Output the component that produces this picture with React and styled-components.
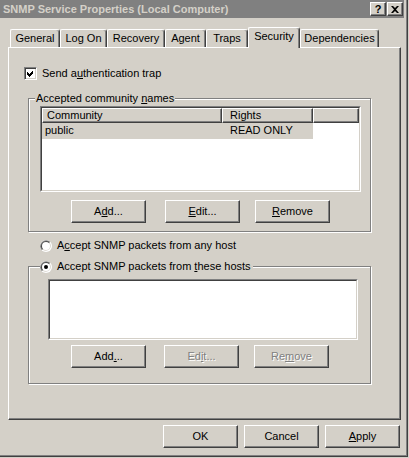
import React from "react";
import styled, { createGlobalStyle } from "styled-components";

const GlobalStyle = createGlobalStyle`
  html, body {
    margin: 0;
    padding: 0;
    background: #d4d0c8;
  }
  body {
    font-family: "Liberation Sans", Arial, sans-serif;
    font-size: 11px;
    color: #000;
  }
  * {
    box-sizing: border-box;
  }
`;

const Window = styled.div`
  width: 408px;
  height: 457px;
  display: flex;
  flex-direction: column;
  background: #d4d0c8;
  border-right: 1px solid #404040;
  border-bottom: 1px solid #404040;
  box-shadow: inset -1px -1px 0 #808080;
  padding: 0 3px 3px 0;
`;

const TitleBar = styled.div`
  height: 18px;
  flex: none;
  display: flex;
  align-items: center;
  background: #808080;
  padding: 0 1px 0 3px;
`;

const TitleText = styled.div`
  flex: 1;
  font-weight: bold;
  font-size: 11px;
  line-height: 18px;
  color: #d4d0c8;
  white-space: nowrap;
`;

const CaptionButton = styled.div`
  width: 16px;
  height: 14px;
  margin-left: ${(p) => p.$ml || 0}px;
  display: flex;
  align-items: center;
  justify-content: center;
  background: #d4d0c8;
  border: 1px solid;
  border-color: #fff #404040 #404040 #fff;
  box-shadow: inset -1px -1px 0 #808080;
  font-weight: bold;
  font-size: 11px;
  line-height: 12px;
`;

const Body = styled.div`
  flex: 1;
  display: flex;
  flex-direction: column;
  padding: 9px 3px 0 8px;
`;

const TabStrip = styled.div`
  display: flex;
  align-items: flex-end;
  height: 20px;
  margin-left: 2px;
`;

const Tab = styled.div`
  width: ${(p) => p.$w}px;
  height: ${(p) => (p.$active ? 21 : 18)}px;
  margin-bottom: ${(p) => (p.$active ? -1 : 0)}px;
  position: relative;
  z-index: ${(p) => (p.$active ? 1 : 0)};
  background: #d4d0c8;
  border-top: 1px solid #fff;
  border-left: 1px solid #fff;
  border-right: 1px solid #404040;
  border-radius: 2px 3px 0 0;
  box-shadow: inset -1px 0 0 #808080;
  text-align: center;
  line-height: ${(p) => (p.$active ? 17 : 16)}px;
  white-space: nowrap;
`;

const Panel = styled.div`
  width: 393px;
  height: 373px;
  flex: none;
  display: flex;
  flex-direction: column;
  border: 1px solid;
  border-color: #fff #404040 #404040 #fff;
  box-shadow: inset -1px -1px 0 #808080;
`;

const OptionRow = styled.label`
  display: flex;
  align-items: center;
  height: 13px;
  margin-left: ${(p) => p.$ml}px;
  margin-top: ${(p) => p.$mt || 0}px;
  line-height: 13px;
  white-space: nowrap;
`;

const CheckBox = styled.span`
  width: 13px;
  height: 13px;
  flex: none;
  margin-right: 5px;
  background: #fff;
  border: 1px solid;
  border-color: #808080 #fff #fff #808080;
  box-shadow: inset 1px 1px 0 #404040, inset -1px -1px 0 #d4d0c8;
  display: flex;
`;

const RadioMark = styled.svg`
  flex: none;
  margin-right: 5px;
`;

const Group = styled.fieldset`
  width: 343px;
  margin: ${(p) => p.$mt}px 0 0 19px;
  padding: ${(p) => p.$pt}px 0 ${(p) => p.$pb}px 0;
  min-width: 0;
  border: 1px solid #808080;
  box-shadow: 1px 1px 0 #fff, inset 1px 1px 0 #fff;
`;

const Legend = styled.legend`
  display: flex;
  align-items: center;
  margin-left: ${(p) => p.$ml}px;
  padding: ${(p) => (p.$radio ? "0 2px 0 0" : "0 1px")};
  height: 13px;
  line-height: 13px;
  background: #d4d0c8;
  white-space: nowrap;
`;

const SunkenOuter = styled.div`
  width: ${(p) => p.$w}px;
  height: ${(p) => p.$h}px;
  margin-left: ${(p) => p.$ml}px;
  border: 1px solid;
  border-color: #808080 #fff #fff #808080;
`;

const SunkenInner = styled.div`
  width: 100%;
  height: 100%;
  background: #fff;
  border: 1px solid;
  border-color: #404040 #d4d0c8 #d4d0c8 #404040;
  display: flex;
  flex-direction: column;
  overflow: hidden;
`;

const HeaderRow = styled.div`
  display: flex;
  height: 15px;
  flex: none;
`;

const HeaderCell = styled.div`
  width: ${(p) => (p.$w ? `${p.$w}px` : "auto")};
  flex: ${(p) => (p.$w ? "none" : 1)};
  padding-left: ${(p) => p.$pl || 0}px;
  background: #d4d0c8;
  border: 1px solid;
  border-color: #fff #404040 #404040 #fff;
  box-shadow: inset -1px -1px 0 #808080;
  line-height: 12px;
  white-space: nowrap;
`;

const ItemRow = styled.div`
  display: flex;
  width: 271px;
  height: 16px;
  background: ${(p) => (p.$selected ? "#d4d0c8" : "transparent")};
`;

const ItemCell = styled.div`
  width: ${(p) => p.$w}px;
  padding-left: ${(p) => p.$pl}px;
  line-height: 15px;
  white-space: nowrap;
`;

const ButtonRow = styled.div`
  display: flex;
  margin-top: ${(p) => p.$mt || 0}px;
  justify-content: ${(p) => (p.$end ? "flex-end" : "flex-start")};
  padding-right: ${(p) => (p.$end ? 1 : 0)}px;
`;

const Button = styled.div`
  width: 75px;
  height: 23px;
  flex: none;
  margin-left: ${(p) => p.$ml || 0}px;
  display: flex;
  align-items: center;
  justify-content: center;
  background: #d4d0c8;
  border: 1px solid;
  border-color: #fff #404040 #404040 #fff;
  box-shadow: inset -1px -1px 0 #808080;
  color: ${(p) => (p.$disabled ? "#808080" : "#000")};
  text-shadow: ${(p) => (p.$disabled ? "1px 1px 0 #fff" : "none")};
  padding-bottom: 1px;
  white-space: nowrap;
`;

function Radio({ checked }) {
  return (
    <RadioMark width="12" height="12" viewBox="0 0 12 12">
      <circle cx="6" cy="6" r="6" fill="#fff" />
      <path d="M1.76 10.24 A6 6 0 0 1 10.24 1.76 L6 6 Z" fill="#808080" />
      <path d="M2.47 9.53 A5 5 0 0 1 9.53 2.47 L6 6 Z" fill="#404040" />
      <path d="M9.53 2.47 A5 5 0 0 1 2.47 9.53 L6 6 Z" fill="#d4d0c8" />
      <circle cx="6" cy="6" r="4" fill="#fff" />
      {checked && <circle cx="6" cy="6" r="2" fill="#000" />}
    </RadioMark>
  );
}

export default function App() {
  return (
    <>
      <GlobalStyle />
      <Window>
        <TitleBar>
          <TitleText>SNMP Service Properties (Local Computer)</TitleText>
          <CaptionButton>?</CaptionButton>
          <CaptionButton $ml={1}>
            <svg width="8" height="7" viewBox="0 0 8 7">
              <path d="M0 0 L2 0 L4 2 L6 0 L8 0 L5 3.5 L8 7 L6 7 L4 5 L2 7 L0 7 L3 3.5 Z" fill="#000" />
            </svg>
          </CaptionButton>
        </TitleBar>
        <Body>
          <TabStrip>
            <Tab $w={50}>General</Tab>
            <Tab $w={47}>Log On</Tab>
            <Tab $w={58}>Recovery</Tab>
            <Tab $w={41}>Agent</Tab>
            <Tab $w={42}>Traps</Tab>
            <Tab $w={52} $active>Security</Tab>
            <Tab $w={79}>Dependencies</Tab>
          </TabStrip>
          <Panel>
            <OptionRow $ml={15} $mt={19}>
              <CheckBox>
                <svg width="11" height="11" viewBox="0 0 11 11" shapeRendering="crispEdges">
                  <path d="M2 4 L4 6 L8 2 L8 5 L4 9 L2 7 Z" fill="#000" />
                </svg>
              </CheckBox>
              <span>
                Send a<u>u</u>thentication trap
              </span>
            </OptionRow>

            <Group $mt={12} $pt={1} $pb={8}>
              <Legend $ml={6}>
                <span>
                  Accepted community <u>n</u>ames
                </span>
              </Legend>
              <SunkenOuter $w={321} $h={86} $ml={11}>
                <SunkenInner>
                  <HeaderRow>
                    <HeaderCell $w={180} $pl={4}>Community</HeaderCell>
                    <HeaderCell $w={91} $pl={7}>Rights</HeaderCell>
                    <HeaderCell />
                  </HeaderRow>
                  <ItemRow $selected>
                    <ItemCell $w={180} $pl={3}>public</ItemCell>
                    <ItemCell $w={91} $pl={8}>READ ONLY</ItemCell>
                  </ItemRow>
                </SunkenInner>
              </SunkenOuter>
              <ButtonRow $mt={8}>
                <Button $ml={42}>
                  <span>
                    A<u>d</u>d...
                  </span>
                </Button>
                <Button $ml={19}>
                  <span>
                    <u>E</u>dit...
                  </span>
                </Button>
                <Button $ml={15}>
                  <span>
                    <u>R</u>emove
                  </span>
                </Button>
              </ButtonRow>
            </Group>

            <OptionRow $ml={31} $mt={7}>
              <Radio />
              <span>
                A<u>c</u>cept SNMP packets from any host
              </span>
            </OptionRow>

            <Group $mt={8} $pt={6} $pb={15}>
              <Legend $ml={11} $radio>
                <Radio checked />
                <span>
                  Accept SNMP packets from <u>t</u>hese hosts
                </span>
              </Legend>
              <SunkenOuter $w={310} $h={61} $ml={19}>
                <SunkenInner />
              </SunkenOuter>
              <ButtonRow $mt={5}>
                <Button $ml={42}>
                  <span>
                    Add<u>.</u>..
                  </span>
                </Button>
                <Button $ml={18} $disabled>
                  <span>
                    Ed<u>i</u>t...
                  </span>
                </Button>
                <Button $ml={15} $disabled>
                  <span>
                    Re<u>m</u>ove
                  </span>
                </Button>
              </ButtonRow>
            </Group>
          </Panel>
          <ButtonRow $mt={5} $end>
            <Button>OK</Button>
            <Button $ml={6}>Cancel</Button>
            <Button $ml={6}>
              <span>
                <u>A</u>pply
              </span>
            </Button>
          </ButtonRow>
        </Body>
      </Window>
    </>
  );
}
